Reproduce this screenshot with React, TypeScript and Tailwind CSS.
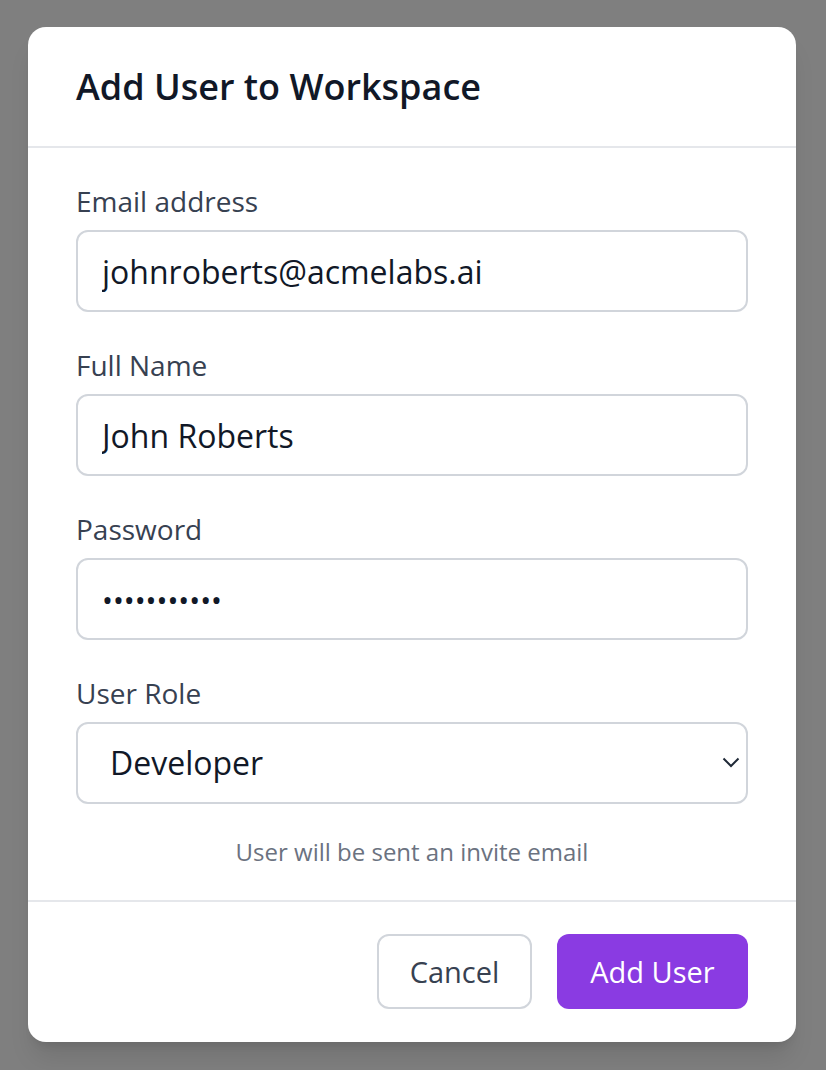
import React from 'react';

const font = { fontFamily: '"Open Sans", "Noto Sans", sans-serif' };

function Field({ label, children }: { label: string; children: React.ReactNode }) {
  return (
    <div className="flex flex-col">
      <label className="text-[28px] leading-[38px] text-[#374151] mb-[10px]">{label}</label>
      {children}
    </div>
  );
}

const inputCls =
  'w-full h-[82px] rounded-[12px] border-2 border-[#d1d5db] bg-white px-[24px] text-[32px] text-[#111827] outline-none';

export default function App() {
  return (
    <div className="w-[826px] h-[1070px] bg-[#7f7f7f] pt-[27px] px-[28px]" style={font}>
      <div className="bg-white rounded-[18px] w-[768px] h-[1015px] flex flex-col shadow-xl">
        {/* header */}
        <div className="h-[121px] border-b-2 border-[#e5e7eb] flex items-center px-[48px]">
          <h1 className="text-[36px] font-semibold text-[#111827]">Add User to Workspace</h1>
        </div>

        {/* body */}
        <div className="px-[48px] pt-[34px] flex flex-col gap-[34px]">
          <Field label="Email address">
            <input className={inputCls} readOnly value="johnroberts@acmelabs.ai" />
          </Field>
          <Field label="Full Name">
            <input className={inputCls} readOnly value="John Roberts" />
          </Field>
          <Field label="Password">
            <input
              className="w-full h-[82px] rounded-[12px] border-2 border-[#d1d5db] bg-white px-[24px] text-[29px] text-[#111827] outline-none"
              type="password"
              readOnly
              value="secretpass1"
            />
          </Field>
          <Field label="User Role">
            <div className="relative">
              <select
                className="w-full h-[82px] rounded-[12px] border-2 border-[#d1d5db] bg-white pl-[32px] text-[32px] text-[#111827] outline-none appearance-none"
                defaultValue="Developer"
              >
                <option>Developer</option>
                <option>Admin</option>
                <option>Viewer</option>
              </select>
              <svg
                className="absolute right-[8px] top-[35px] pointer-events-none"
                width="18"
                height="11"
                viewBox="0 0 18 11"
                fill="none"
              >
                <path d="M1.5 1.5L9 9L16.5 1.5" stroke="#1f2937" strokeWidth="2" />
              </svg>
            </div>
          </Field>
        </div>

        <p className="text-center text-[24px] leading-[30px] text-[#6b7280] mt-[33px]">
          User will be sent an invite email
        </p>

        {/* footer */}
        <div className="mt-[33px] border-t-2 border-[#e5e7eb] flex justify-end gap-[25px] px-[48px] pt-[32px]">
          <button className="w-[155px] h-[75px] rounded-[12px] border-2 border-[#d1d5db] bg-white text-[29px] text-[#374151]">
            Cancel
          </button>
          <button className="w-[191px] h-[75px] rounded-[12px] bg-[#8a3be2] text-[29px] text-white">
            Add User
          </button>
        </div>
      </div>
    </div>
  );
}
